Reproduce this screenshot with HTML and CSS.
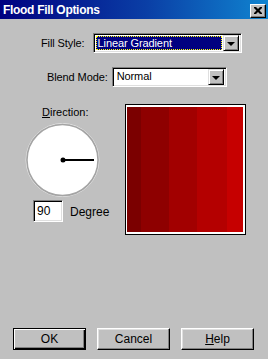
FILE: index.html
```html
<!DOCTYPE html>
<html>
  <head>
    <title>Flood Fill Options</title>
    <link rel="stylesheet" href="styles.css">
  </head>
  <body>
    <div class="dialog">
      <div class="titlebar">
        <span class="title">Flood Fill Options</span>
        <div class="close-btn">
          <svg width="8" height="7" viewBox="0 0 8 7">
            <path d="M0 0h2l2 2 2-2h2v1l-2.5 2.5 2.5 2.5v1h-2l-2-2-2 2h-2v-1l2.5-2.5-2.5-2.5z" fill="#000"/>
          </svg>
        </div>
      </div>

      <div class="row row-fill">
        <span class="label">Fill Style:</span>
        <div class="combo combo-fill">
          <div class="combo-text focused">Linear Gradient</div>
          <div class="combo-arrow"><span class="tri"></span></div>
        </div>
      </div>

      <div class="row row-blend">
        <span class="label">Blend Mode:</span>
        <div class="combo combo-blend">
          <div class="combo-text">Normal</div>
          <div class="combo-arrow"><span class="tri"></span></div>
        </div>
      </div>

      <div class="main">
        <div class="direction">
          <div class="dir-label"><u>D</u>irection:</div>
          <svg class="dial" width="76" height="76" viewBox="0 0 76 76">
            <circle cx="37.5" cy="38" r="36.5" fill="none" stroke="#e4e4e4" stroke-width="1"/>
            <circle cx="37.5" cy="38" r="35.5" fill="#fff" stroke="#a4a4a4" stroke-width="1.5"/>
            <line x1="38" y1="38" x2="69" y2="38" stroke="#000" stroke-width="2"/>
            <circle cx="38" cy="38" r="2.5" fill="#000"/>
          </svg>
          <div class="degree-row">
            <div class="field">90</div>
            <span class="degree-label">Degree</span>
          </div>
        </div>
        <div class="preview">
          <div class="stripes">
            <div class="stripe" style="width: 14px; background: #7b0000;"></div>
            <div class="stripe" style="width: 28px; background: #8e0000;"></div>
            <div class="stripe" style="width: 28px; background: #a20000;"></div>
            <div class="stripe" style="width: 30px; background: #b40000;"></div>
            <div class="stripe" style="width: 16px; background: #c60000;"></div>
          </div>
        </div>
      </div>

      <div class="buttons">
        <div class="btn default"><span>OK</span></div>
        <div class="btn"><span>Cancel</span></div>
        <div class="btn"><span><u>H</u>elp</span></div>
      </div>
    </div>
  </body>
</html>
```

FILE: styles.css
```css
body {
  margin: 0;
  background: #c0c0c0;
  font-family: "Liberation Sans", Arial, sans-serif;
  font-size: 11px;
  color: #000;
}
.dialog {
  width: 268px;
  height: 359px;
  background: #c0c0c0;
}
.titlebar {
  height: 19px;
  display: flex;
  align-items: center;
  justify-content: space-between;
  background: linear-gradient(to right, #000080 0%, #0a3fa6 55%, #1084d0 100%);
  padding: 0 2px 0 3px;
  box-sizing: border-box;
}
.title {
  color: #fff;
  font-weight: bold;
  font-size: 12px;
  letter-spacing: -0.3px;
}
.close-btn {
  width: 16px;
  height: 14px;
  box-sizing: border-box;
  background: #c0c0c0;
  border-top: 1px solid #fff;
  border-left: 1px solid #fff;
  border-right: 1px solid #000;
  border-bottom: 1px solid #000;
  box-shadow: inset -1px -1px 0 #808080;
  display: flex;
  align-items: center;
  justify-content: center;
  margin-top: 2px;
}
.row {
  display: flex;
  align-items: center;
}
.row-fill {
  margin-top: 14px;
  padding-left: 41px;
  gap: 8px;
}
.row-blend {
  margin-top: 14px;
  padding-left: 47px;
  gap: 4px;
}
.label {
  letter-spacing: -0.1px;
}
.combo {
  height: 20px;
  box-sizing: border-box;
  background: #fff;
  border-top: 1px solid #808080;
  border-left: 1px solid #808080;
  border-right: 1px solid #fff;
  border-bottom: 1px solid #fff;
  box-shadow: inset 1px 1px 0 #000, inset -1px -1px 0 #dfdfdf;
  padding: 2px;
  display: flex;
  align-items: center;
}
.combo-fill {
  width: 149px;
}
.combo-blend {
  width: 115px;
}
.combo-text {
  flex: 1;
  height: 14px;
  line-height: 13px;
  padding-left: 2px;
  box-sizing: border-box;
  letter-spacing: -0.1px;
}
.combo-text.focused {
  background: #000080;
  color: #fff;
  border: 1px dotted #ffff00;
  padding-left: 1px;
  margin-right: 1px;
}
.combo-arrow {
  width: 16px;
  height: 16px;
  box-sizing: border-box;
  background: #c0c0c0;
  border-top: 1px solid #dfdfdf;
  border-left: 1px solid #dfdfdf;
  border-right: 1px solid #000;
  border-bottom: 1px solid #000;
  box-shadow: inset 1px 1px 0 #fff, inset -1px -1px 0 #808080;
  display: flex;
  align-items: center;
  justify-content: center;
}
.tri {
  width: 0;
  height: 0;
  border-left: 4px solid transparent;
  border-right: 4px solid transparent;
  border-top: 4px solid #000;
  margin-top: 1px;
}
.main {
  display: flex;
  margin-top: 17px;
  height: 131px;
}
.direction {
  width: 125px;
  display: flex;
  flex-direction: column;
}
.dir-label {
  margin-left: 42px;
  margin-top: 2px;
  height: 14px;
}
.dial {
  display: block;
  margin-left: 25px;
  margin-top: 2px;
}
.degree-row {
  display: flex;
  align-items: center;
  margin-left: 33px;
  margin-top: 2px;
  gap: 7px;
}
.field {
  width: 30px;
  height: 22px;
  box-sizing: border-box;
  background: #fff;
  border-top: 1px solid #808080;
  border-left: 1px solid #808080;
  border-right: 1px solid #fff;
  border-bottom: 1px solid #fff;
  box-shadow: inset 1px 1px 0 #000, inset -1px -1px 0 #dfdfdf;
  padding: 3px 0 0 3px;
  font-size: 12px;
}
.degree-label {
  font-size: 12px;
  margin-top: 2px;
}
.preview {
  width: 121px;
  height: 131px;
  box-sizing: border-box;
  border: 1px solid #000;
  background: #fff;
  padding: 2px 2px 2px 1px;
}
.stripes {
  display: flex;
  height: 100%;
}
.stripe {
  height: 100%;
}
.buttons {
  display: flex;
  gap: 11px;
  margin-top: 93px;
  padding-left: 13px;
}
.btn {
  width: 73px;
  height: 22px;
  box-sizing: border-box;
  background: #c0c0c0;
  border-top: 1px solid #fff;
  border-left: 1px solid #fff;
  border-right: 1px solid #000;
  border-bottom: 1px solid #000;
  box-shadow: inset -1px -1px 0 #808080, inset 1px 1px 0 #dfdfdf;
  display: flex;
  align-items: center;
  justify-content: center;
  font-size: 12px;
}
.btn.default {
  border: 1px solid #000;
  box-shadow: inset 1px 1px 0 #fff, inset -1px -1px 0 #000, inset -2px -2px 0 #808080;
}
```
